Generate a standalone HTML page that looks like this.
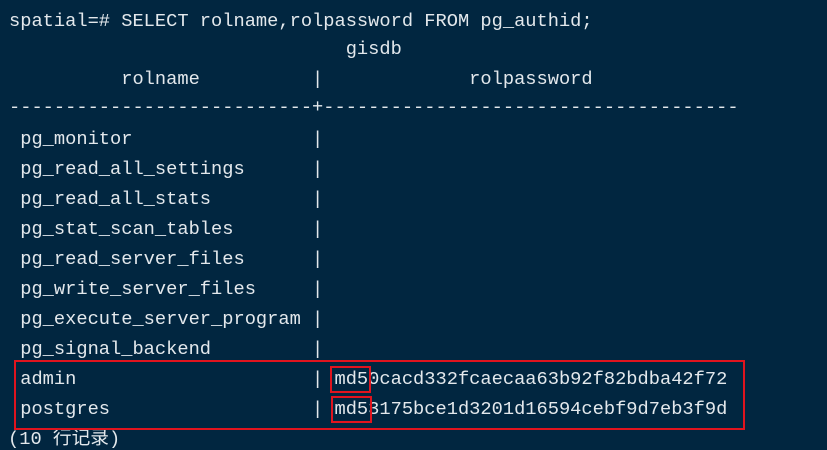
<!DOCTYPE html>
<html><head><meta charset="utf-8"><style>
html,body{margin:0;padding:0;width:827px;height:449px;overflow:hidden;background:#012640;}
.l{position:absolute;left:9px;margin:0;font-family:"Liberation Mono","Noto Sans CJK SC",monospace;font-size:18.72px;line-height:22px;color:#e3e8ec;white-space:pre;}
.box{position:absolute;border:2px solid #e0141e;}
</style></head><body>
<pre class="l" style="top:10px">spatial=# SELECT rolname,rolpassword FROM pg_authid;</pre>
<pre class="l" style="top:38px">                              gisdb</pre>
<pre class="l" style="top:68px">          rolname          |             rolpassword</pre>
<pre class="l" style="top:96px">---------------------------+-------------------------------------</pre>
<pre class="l" style="top:128px"> pg_monitor                |</pre>
<pre class="l" style="top:158px"> pg_read_all_settings      |</pre>
<pre class="l" style="top:188px"> pg_read_all_stats         |</pre>
<pre class="l" style="top:218px"> pg_stat_scan_tables       |</pre>
<pre class="l" style="top:248px"> pg_read_server_files      |</pre>
<pre class="l" style="top:278px"> pg_write_server_files     |</pre>
<pre class="l" style="top:308px"> pg_execute_server_program |</pre>
<pre class="l" style="top:338px"> pg_signal_backend         |</pre>
<pre class="l" style="top:368px"> admin                     | md50cacd332fcaecaa63b92f82bdba42f72</pre>
<pre class="l" style="top:398px"> postgres                  | md53175bce1d3201d16594cebf9d7eb3f9d</pre>
<pre class="l" style="top:428px;left:8px">(10 行记录)</pre>
<div class="box" style="left:14px;top:360px;width:727px;height:66px"></div>
<div class="box" style="left:330px;top:366px;width:37px;height:23px"></div>
<div class="box" style="left:331px;top:396px;width:37px;height:23px"></div>
</body></html>
